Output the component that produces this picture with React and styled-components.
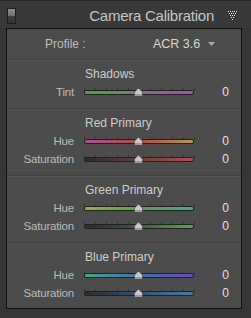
import React from 'react';
import styled, { createGlobalStyle } from 'styled-components';

const GlobalStyle = createGlobalStyle`
  html, body {
    margin: 0;
    padding: 0;
    background: #363636;
  }
  body {
    font-family: 'Liberation Sans', Arial, sans-serif;
  }
`;

const sections = [
  {
    title: 'Shadows',
    rows: [{ label: 'Tint', track: 'linear-gradient(to right, #4fa040, #6c8a60 42%, #8a6a8c 58%, #ab4ab3)' }],
  },
  {
    title: 'Red Primary',
    rows: [
      { label: 'Hue', track: 'linear-gradient(to right, #b24c8e, #b44848 50%, #b8983e)' },
      { label: 'Saturation', track: 'linear-gradient(to right, #2e2c2c, #5e3c3c 45%, #c04848)' },
    ],
  },
  {
    title: 'Green Primary',
    rows: [
      { label: 'Hue', track: 'linear-gradient(to right, #a0ac3a, #56a24a 50%, #3eaa9c)' },
      { label: 'Saturation', track: 'linear-gradient(to right, #2c2e2c, #3e563a 45%, #58aa48)' },
    ],
  },
  {
    title: 'Blue Primary',
    rows: [
      { label: 'Hue', track: 'linear-gradient(to right, #40a688, #3e72ae 50%, #6a48bc)' },
      { label: 'Saturation', track: 'linear-gradient(to right, #2c2d2e, #344c64 45%, #3c80aa)' },
    ],
  },
];

export default function App() {
  return (
    <Page>
      <GlobalStyle />
      <Header>
        <Switch />
        <Title>Camera Calibration</Title>
        <Collapse width="10" height="9" viewBox="0 0 10 9">
          {[0, 1, 2, 3, 4].map((r) =>
            Array.from({ length: 5 - r }).map((_, i) => (
              <rect key={r + '-' + i} x={r + i * 2} y={r * 2} width="1" height="1" fill="#e2e2e2" />
            ))
          )}
        </Collapse>
      </Header>
      <Panel>
        <ProfileRow>
          <ProfileLabel>Profile :</ProfileLabel>
          <ProfileValue>
            ACR 3.6
            <Caret width="7" height="4" viewBox="0 0 7 4">
              <polygon points="0,0 7,0 3.5,4" fill="#a8a8a8" />
            </Caret>
          </ProfileValue>
        </ProfileRow>
        {sections.map((s) => (
          <Section key={s.title}>
            <SectionTitle>{s.title}</SectionTitle>
            {s.rows.map((row) => (
              <Row key={row.label}>
                <Label>{row.label}</Label>
                <Slider>
                  <Ticks />
                  <Track $bg={row.track} />
                  <Thumb width="9" height="8" viewBox="0 0 9 8">
                    <polygon points="4.5,0 8.5,4 8.5,8 0.5,8 0.5,4" fill="#c9c9c9" stroke="#3a3a3a" strokeWidth="0.6" />
                    <rect x="1" y="6" width="7" height="1.6" fill="#9a9a9a" />
                  </Thumb>
                </Slider>
                <Value>0</Value>
              </Row>
            ))}
          </Section>
        ))}
      </Panel>
    </Page>
  );
}

const Page = styled.div`
  width: 251px;
  height: 318px;
  background: #363636;
  overflow: hidden;
  box-sizing: border-box;
  border-top: 1px solid #2a2a2a;
`;

const Header = styled.div`
  height: 27px;
  display: flex;
  align-items: center;
  padding: 0 13px 0 7px;
  background: #393939;
`;

const Switch = styled.div`
  width: 7px;
  height: 14px;
  border: 1px solid #1e1e1e;
  background: linear-gradient(to bottom, #8e8e8e 0, #6e6e6e 50%, #3e3e3e 50%, #333 100%);
  margin-top: 2px;
`;

const Title = styled.div`
  flex: 1;
  text-align: right;
  color: #c6c6c6;
  font-size: 15px;
  letter-spacing: -0.25px;
  padding-right: 14px;
  padding-top: 2px;
`;

const Collapse = styled.svg`
  display: block;
  margin-top: 2px;
`;

const Panel = styled.div`
  margin-left: 6px;
  width: 236px;
  height: 281px;
  box-sizing: border-box;
  border: 1px solid #121212;
  background: #4c4c4c;
`;

const ProfileRow = styled.div`
  height: 30px;
  display: flex;
  align-items: center;
  font-size: 12px;
`;

const ProfileLabel = styled.div`
  width: 108px;
  padding-left: 38px;
  box-sizing: border-box;
  color: #bdbdbd;
  margin-right: 38px;
`;

const ProfileValue = styled.div`
  display: flex;
  align-items: center;
  gap: 8px;
  color: #d6d6d6;
  font-size: 12.5px;
`;

const Caret = styled.svg`
  display: block;
`;

const Section = styled.div`
  border-top: 1px solid #3f3f3f;
  box-shadow: inset 0 1px 0 #555;
  padding: 5px 0 7px;
`;

const SectionTitle = styled.div`
  height: 18px;
  line-height: 18px;
  padding-left: 78px;
  color: #cdcdcd;
  font-size: 12px;
`;

const Row = styled.div`
  height: 18px;
  display: grid;
  grid-template-columns: 67px 110px 25px;
  column-gap: 10px;
  align-items: center;
`;

const Label = styled.div`
  text-align: right;
  color: #bababa;
  font-size: 11.5px;
  letter-spacing: -0.2px;
`;

const Slider = styled.div`
  position: relative;
  height: 18px;
`;

const Ticks = styled.div`
  position: absolute;
  left: 0;
  top: 5px;
  width: 111px;
  height: 3px;
  background: repeating-linear-gradient(to right, #363636 0, #363636 1px, transparent 1px, transparent 11px);
`;

const Track = styled.div`
  position: absolute;
  left: 0;
  right: 0;
  top: 7px;
  height: 3px;
  border: 1px solid #222;
  border-radius: 2px;
  background: ${(p) => p.$bg};
`;

const Thumb = styled.svg`
  position: absolute;
  left: 50px;
  top: 5px;
  display: block;
`;

const Value = styled.div`
  text-align: right;
  color: #e2e2e2;
  font-size: 12px;
`;
